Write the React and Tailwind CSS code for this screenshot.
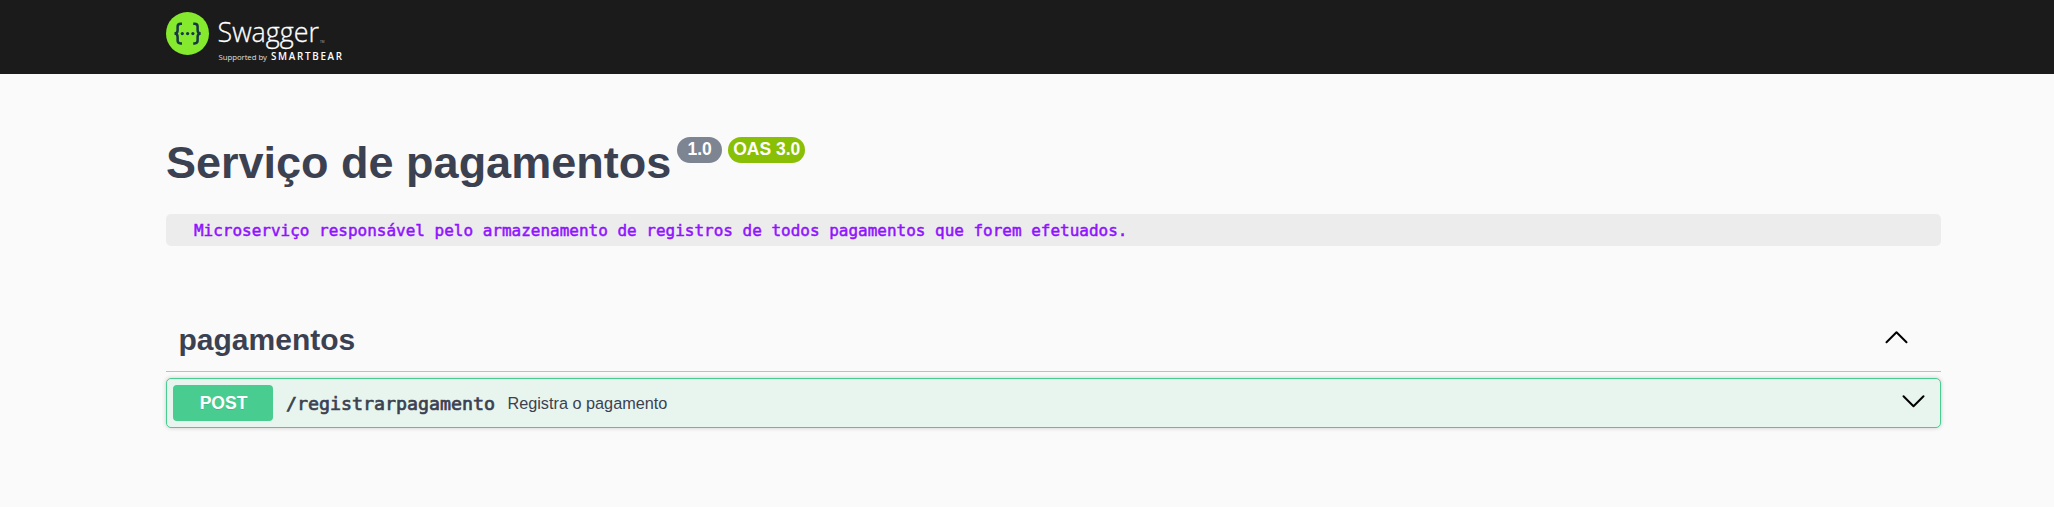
function Logo() {
  return (
    <svg width="180" height="52" viewBox="0 0 180 52" className="block" aria-label="Swagger">
      <circle cx="21.5" cy="21.5" r="21.5" fill="#85ea2d" />
      <g fill="none" stroke="#173647" strokeWidth="2.5">
        <path d="M16 11.8h-1.4c-2.2 0-3 .9-3 2.8v3.6c0 2-.8 3.2-3 3.4 2.2.2 3 1.4 3 3.4v3.6c0 1.9.8 2.8 3 2.8H16" />
        <path d="M27.2 11.8h1.4c2.2 0 3 .9 3 2.8v3.6c0 2 .8 3.2 3 3.4-2.2.2-3 1.4-3 3.4v3.6c0 1.9-.8 2.8-3 2.8h-1.4" />
      </g>
      <g fill="#173647">
        <circle cx="16.3" cy="21.6" r="1.6" />
        <circle cx="21.6" cy="21.6" r="1.6" />
        <circle cx="26.9" cy="21.6" r="1.6" />
      </g>
      <g fill="#fff" fontFamily="'Open Sans', sans-serif">
        <text x="51.5" y="30" fontSize="28" fontWeight="300" stroke="#fff" strokeWidth=".3" textLength="101.5" lengthAdjust="spacingAndGlyphs">Swagger</text>
        <text x="154" y="30.5" fontSize="3" opacity=".6">TM</text>
        <text x="52.5" y="47.7" fontSize="7.8" textLength="48.5" opacity=".85">Supported by</text>
        <text x="105" y="47.7" fontSize="9.8" fontWeight="600" textLength="71">SMARTBEAR</text>
      </g>
    </svg>
  );
}

function Chevron({ up }) {
  return (
    <svg width="25" height="25" viewBox="0 0 25 25" fill="none" stroke="#000" strokeWidth="2" strokeLinecap="round" strokeLinejoin="round">
      <path d={up ? "M2.5 17.3 12.5 7.3l10 10" : "M2.5 7.3l10 10 10-10"} />
    </svg>
  );
}

export default function App() {
  return (
    <div className="min-h-screen bg-[#fafafa] font-['Liberation_Sans',Arial,sans-serif] text-[#3b4151]">
      <header className="h-[74px] bg-[#1b1b1b] pt-3 pl-[166px]">
        <Logo />
      </header>
      <main className="ml-[166px] w-[1775px]">
        <div className="flex items-start pt-[63px]">
          <h1 className="text-[45px] leading-[52px] font-bold whitespace-nowrap">Serviço de pagamentos</h1>
          <span className="ml-1.5 flex h-[26px] w-[45px] items-center justify-center rounded-full bg-[#7d8492] pb-px text-[17.5px] leading-none font-bold text-white">1.0</span>
          <span className="ml-1.5 flex h-[26px] w-[77px] items-center justify-center rounded-full bg-[#89bf04] pb-px text-[17.5px] leading-none font-bold whitespace-nowrap text-white">OAS 3.0</span>
        </div>
        <pre className="mt-[25px] h-8 rounded-[5px] bg-[#ececec] pl-7 font-['DejaVu_Sans_Mono',monospace] text-[15.99px] leading-[33px] text-[#9012fe] [-webkit-text-stroke:0.5px_#9012fe]">Microserviço responsável pelo armazenamento de registros de todos pagamentos que forem efetuados.</pre>
        <section className="mt-[62px]">
          <div className="flex h-16 items-center justify-between border-b border-[#bfbfc3] pr-8 pl-[12.5px]">
            <h2 className="text-[30px] leading-9 font-bold">pagamentos</h2>
            <span className="pb-1"><Chevron up /></span>
          </div>
          <div className="mt-1.5 flex h-[50px] items-center rounded-[5px] border border-[#49cc90] bg-[#e7f5ee] pr-3.5 pl-1.5 shadow-[0_0_4px_rgba(0,0,0,0.19)]">
            <span className="flex h-9 w-[100px] items-center justify-center rounded-[4px] bg-[#49cc90] pl-px text-[17.5px] font-bold text-white [text-shadow:0_1px_0_rgba(0,0,0,0.1)]">POST</span>
            <span className="ml-[13px] pt-px font-['DejaVu_Sans_Mono',monospace] text-[18.27px] [-webkit-text-stroke:0.7px_#3b4151]">/registrarpagamento</span>
            <span className="ml-[12.5px] text-[16.25px]">Registra o pagamento</span>
            <span className="ml-auto pb-1"><Chevron /></span>
          </div>
        </section>
      </main>
    </div>
  );
}
